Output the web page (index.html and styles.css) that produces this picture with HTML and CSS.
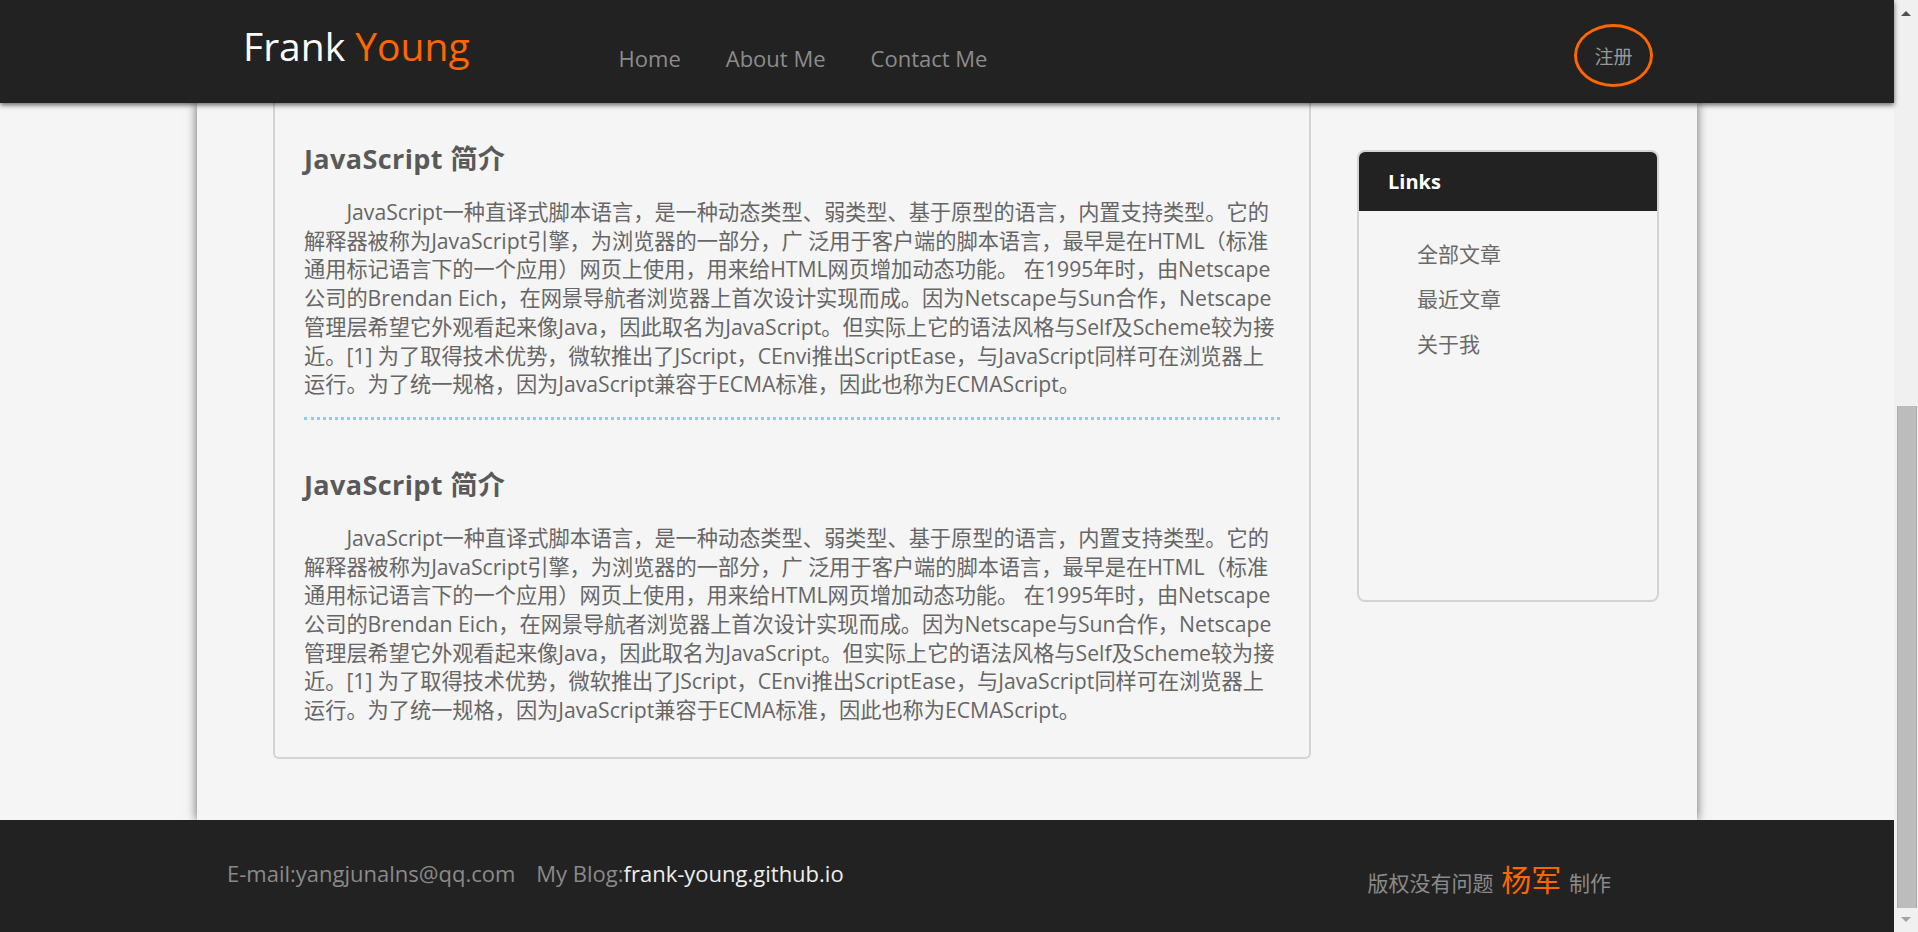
FILE: index.html
```html
<!DOCTYPE html>
<html lang="zh-CN">
<head>
<meta charset="utf-8">
<title>Frank Young</title>
<link rel="stylesheet" href="styles.css">
</head>
<body>
<div class="window">
  <div class="page">
    <header class="topbar">
      <div class="topbar-inner">
        <a class="logo" href="#">Frank <span class="accent">Young</span></a>
        <nav class="nav">
          <a href="#">Home</a>
          <a href="#">About Me</a>
          <a href="#">Contact Me</a>
        </nav>
        <a class="register" href="#">注册</a>
      </div>
    </header>

    <main class="main">
      <div class="container">
        <div class="posts">
          <section class="post">
            <h2 class="post-title">JavaScript 简介</h2>
            <p class="post-body">JavaScript一种直译式脚本语言，是一种动态类型、弱类型、基于原型的语言，内置支持类型。它的<br>解释器被称为JavaScript引擎，为浏览器的一部分，广 泛用于客户端的脚本语言，最早是在HTML（标准<br>通用标记语言下的一个应用）网页上使用，用来给HTML网页增加动态功能。 在1995年时，由Netscape<br>公司的Brendan Eich，在网景导航者浏览器上首次设计实现而成。因为Netscape与Sun合作，Netscape<br>管理层希望它外观看起来像Java，因此取名为JavaScript。但实际上它的语法风格与Self及Scheme较为接<br>近。[1] 为了取得技术优势，微软推出了JScript，CEnvi推出ScriptEase，与JavaScript同样可在浏览器上<br>运行。为了统一规格，因为JavaScript兼容于ECMA标准，因此也称为ECMAScript。</p>
          </section>
          <section class="post">
            <h2 class="post-title">JavaScript 简介</h2>
            <p class="post-body">JavaScript一种直译式脚本语言，是一种动态类型、弱类型、基于原型的语言，内置支持类型。它的<br>解释器被称为JavaScript引擎，为浏览器的一部分，广 泛用于客户端的脚本语言，最早是在HTML（标准<br>通用标记语言下的一个应用）网页上使用，用来给HTML网页增加动态功能。 在1995年时，由Netscape<br>公司的Brendan Eich，在网景导航者浏览器上首次设计实现而成。因为Netscape与Sun合作，Netscape<br>管理层希望它外观看起来像Java，因此取名为JavaScript。但实际上它的语法风格与Self及Scheme较为接<br>近。[1] 为了取得技术优势，微软推出了JScript，CEnvi推出ScriptEase，与JavaScript同样可在浏览器上<br>运行。为了统一规格，因为JavaScript兼容于ECMA标准，因此也称为ECMAScript。</p>
          </section>
        </div>

        <aside class="sidebar">
          <div class="sidebar-title">Links</div>
          <ul class="sidebar-links">
            <li><a href="#">全部文章</a></li>
            <li><a href="#">最近文章</a></li>
            <li><a href="#">关于我</a></li>
          </ul>
        </aside>
      </div>
    </main>

    <footer class="footer">
      <div class="footer-inner">
        <div class="contact">E-mail:yangjunalns@qq.com<span class="blog">My Blog:<a href="#">frank-young.github.io</a></span></div>
        <div class="copyright">版权没有问题 <span class="author">杨军</span> 制作</div>
      </div>
    </footer>
  </div>

  <div class="scrollbar">
    <div class="scroll-arrow up"></div>
    <div class="scroll-track"><div class="scroll-thumb"></div></div>
    <div class="scroll-arrow down"></div>
  </div>
</div>
</body>
</html>
```

FILE: styles.css
```css
* { box-sizing: border-box; }

html, body {
  margin: 0;
  padding: 0;
  height: 100%;
  overflow: hidden;
  background: #f5f5f5;
  font-family: "Open Sans", "Noto Sans CJK SC", sans-serif;
}

a { text-decoration: none; color: inherit; }

.window {
  display: flex;
  height: 932px;
}

.page {
  flex: 1;
  display: flex;
  flex-direction: column;
  min-width: 0;
}

/* ---------- header ---------- */
.topbar {
  height: 103px;
  flex: none;
  background: #222;
  position: relative;
  z-index: 3;
  box-shadow: 0 2px 5px rgba(0, 0, 0, 0.6);
}

.topbar-inner {
  width: 1500px;
  height: 100%;
  margin: 0 auto;
  padding: 0 44px 0 46px;
  display: flex;
  align-items: flex-start;
}

.logo {
  margin-top: 26px;
  font-size: 39px;
  line-height: 1;
  color: #fff;
  white-space: nowrap;
}

.logo .accent { color: #ff6600; }

.nav {
  display: flex;
  gap: 45px;
  margin-left: 149px;
  margin-top: 47px;
}

.nav a {
  font-size: 22px;
  line-height: 1;
  color: #8c8c8c;
  white-space: nowrap;
}

.register {
  margin-left: auto;
  margin-top: 24px;
  width: 79px;
  height: 63px;
  border: 3px solid #ff6600;
  border-radius: 50%;
  display: flex;
  align-items: center;
  justify-content: center;
  font-family: "Noto Sans CJK SC", sans-serif;
  font-size: 19px;
  color: #999;
}

/* ---------- main ---------- */
.main {
  flex: 1;
  display: flex;
  justify-content: center;
  min-height: 0;
}

.container {
  width: 1500px;
  height: 100%;
  background: #f5f5f5;
  box-shadow: 0 0 10px rgba(0, 0, 0, 0.6);
  display: flex;
  align-items: flex-start;
  gap: 46px;
  padding-left: 76px;
  position: relative;
  z-index: 1;
}

.posts {
  width: 1038px;
  flex: none;
  border: 2px solid #d4d4d4;
  border-top: none;
  border-radius: 0 0 6px 6px;
  padding: 0 29px 32px;
}

.post {
  padding: 47px 0 18px;
  border-bottom: 3px dotted #86d0ee;
}

.post:first-child { padding-top: 38px; }

.post:last-child {
  border-bottom: none;
  padding-bottom: 0;
}

.post-title {
  margin: 0 0 21px;
  font-size: 27px;
  letter-spacing: 0.4px;
  line-height: 36px;
  font-weight: 700;
  color: #595959;
}

.post-body {
  margin: 0;
  font-size: 21.2px;
  line-height: 28.7px;
  color: #666;
  text-indent: 2em;
  white-space: nowrap;
}

/* ---------- sidebar ---------- */
.sidebar {
  width: 302px;
  flex: none;
  height: 452px;
  margin-top: 47px;
  border: 2px solid #d4d4d4;
  border-radius: 8px;
  overflow: hidden;
}

.sidebar-title {
  height: 59px;
  background: #222;
  color: #fff;
  font-weight: 700;
  font-size: 20px;
  display: flex;
  align-items: center;
  padding-left: 29px;
}

.sidebar-links {
  list-style: none;
  margin: 0;
  padding: 21px 0 0 58px;
}

.sidebar-links li {
  font-size: 21px;
  line-height: 45px;
  color: #6a6a6a;
}

/* ---------- footer ---------- */
.footer {
  height: 112px;
  flex: none;
  background: #222;
  position: relative;
  z-index: 2;
}

.footer-inner {
  width: 1500px;
  margin: 0 auto;
  padding: 0 86px 0 30px;
  display: flex;
  justify-content: space-between;
  align-items: flex-start;
}

.contact {
  margin-top: 42px;
  font-size: 22px;
  line-height: 1;
  color: #8a8a8a;
  white-space: nowrap;
}

.contact .blog { margin-left: 21px; }
.contact a { color: #eee; }

.copyright {
  margin-top: 43px;
  font-family: "Noto Sans CJK SC", sans-serif;
  font-size: 21px;
  line-height: 1;
  color: #8a8a8a;
  white-space: nowrap;
  word-spacing: 3px;
}

.copyright .author {
  font-size: 30px;
  color: #ff6600;
}

/* ---------- fake scrollbar ---------- */
.scrollbar {
  width: 24px;
  flex: none;
  background: #f0f0f0;
  display: flex;
  flex-direction: column;
  align-items: center;
}

.scroll-arrow {
  width: 0;
  height: 0;
  border-left: 5px solid transparent;
  border-right: 5px solid transparent;
}

.scroll-arrow.up {
  margin-top: 11px;
  border-bottom: 5px solid #505050;
}

.scroll-arrow.down {
  margin-bottom: 10px;
  border-top: 5px solid #a3a3a3;
}

.scroll-track {
  flex: 1;
  width: 100%;
  padding: 390px 1px 0 3px;
  display: flex;
}

.scroll-thumb {
  width: 100%;
  height: 502px;
  background: #bcbcbc;
  border-left: 1px solid #acacac;
  border-right: 1px solid #acacac;
}
```
